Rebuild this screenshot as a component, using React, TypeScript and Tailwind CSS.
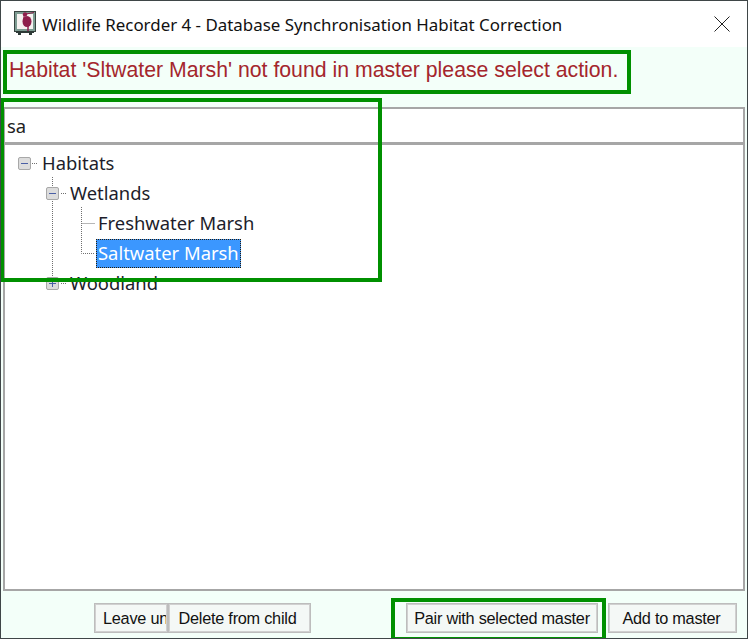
import { ReactNode } from "react";

function AppIcon() {
  return (
    <svg width="24" height="26" viewBox="0 0 24 26" className="shrink-0">
      <rect x="1.5" y="0.5" width="21" height="20" fill="#7d9c92" stroke="#37433f" strokeWidth="1" />
      <rect x="4" y="3" width="16" height="15" fill="#f6f3f1" />
      <ellipse cx="14" cy="10.5" rx="4.5" ry="5.5" fill="#8e1f4c" />
      <circle cx="12" cy="3.5" r="2.2" fill="#8e1f4c" />
      <path d="M11 4 L12 8 L10 8 Z" fill="#8e1f4c" />
      <path d="M13 3 L21 1.5" stroke="#8e1f4c" strokeWidth="1" />
      <path d="M15 15 V20" stroke="#8e1f4c" strokeWidth="1.5" />
      <rect x="3" y="20" width="18" height="2" fill="#2e3a37" />
      <rect x="5" y="22" width="3" height="2" fill="#2e3a37" />
      <rect x="16" y="22" width="3" height="2" fill="#2e3a37" />
    </svg>
  );
}

function CloseIcon() {
  return (
    <svg width="16" height="16" viewBox="0 0 16 16">
      <path d="M0.5 0.5 L15.5 15.5 M15.5 0.5 L0.5 15.5" stroke="#222" strokeWidth="1" fill="none" />
    </svg>
  );
}

function Expander({ open }: { open: boolean }) {
  return (
    <span className="relative block w-[13px] h-[13px] shrink-0 rounded-[2px] border border-[#a8a8a8] bg-[#dcdcdc]">
      <span className="absolute left-[2px] top-[5px] w-[7px] h-px bg-[#4a5fa5]" />
      {!open && <span className="absolute left-[5px] top-[2px] w-px h-[7px] bg-[#4a5fa5]" />}
    </span>
  );
}

function TreeRow({ indent, open, selected, children }: { indent: string; open?: boolean; selected?: boolean; children: ReactNode }) {
  return (
    <div className={`flex items-center h-[30px] ${indent}`}>
      {open !== undefined && <Expander open={open} />}
      {selected ? (
        <span className="flex items-center h-[29px] ml-[1px] px-[1px] bg-[#3b97ff] text-white border border-dotted border-[#2a1c08]">{children}</span>
      ) : (
        <span className={open !== undefined ? "ml-[11px]" : "ml-[3px]"}>{children}</span>
      )}
    </div>
  );
}

function TreeLines() {
  return (
    <svg width="120" height="150" viewBox="0 0 120 150" className="absolute left-0 top-0">
      <g stroke="#6f6f6f" strokeWidth="1" strokeDasharray="1 1" fill="none">
        <path d="M27 18.5 H33" />
        <path d="M47.5 32 V131" />
        <path d="M56 48.5 H62" />
        <path d="M76.5 62 V108.5 H90" />
        <path d="M76.5 78.5 H90" />
        <path d="M56 138.5 H62" />
      </g>
    </svg>
  );
}

function ActionButton({ className, children }: { className: string; children: ReactNode }) {
  return (
    <button className={`h-[30px] pt-px overflow-hidden whitespace-nowrap border-2 border-[#d0d0d0] outline outline-1 -outline-offset-1 outline-[#bdbdbd] bg-[#f4f8f6] text-[#111] text-[16.3px] font-['Liberation_Sans',sans-serif] tracking-[-0.25px] ${className}`}>
      {children}
    </button>
  );
}

export default function App() {
  return (
    <div className="relative w-[748px] h-[639px] overflow-hidden bg-[#f3fff9] border border-[#3f4648] flex flex-col">
      {/* Title bar */}
      <div className="flex items-center h-[46px] bg-white pl-[12px] pr-[17px] shrink-0">
        <AppIcon />
        <span className="ml-[5px] pt-[2px] text-[16.9px] text-[#111] font-['Noto_Sans',sans-serif] whitespace-nowrap">
          Wildlife Recorder 4 - Database Synchronisation Habitat Correction
        </span>
        <span className="ml-auto flex"><CloseIcon /></span>
      </div>

      {/* Message */}
      <div className="h-[60px] shrink-0 pl-[8px] pt-[9px] text-[21.25px] leading-[28px] text-[#a4262c] font-['Liberation_Sans',sans-serif] whitespace-nowrap">
        Habitat 'Sltwater Marsh' not found in master please select action.
      </div>

      {/* Search box */}
      <div className="mx-[2px] h-[38px] shrink-0 flex items-center pl-[2px] bg-white border-2 border-[#a6a6a6] border-b-[3px] text-[18.4px] text-[#222] font-['Noto_Sans',sans-serif]">
        sa
      </div>

      {/* Tree */}
      <div className="relative mx-[2px] h-[446px] shrink-0 bg-white border-2 border-t-0 border-[#a6a6a6] pt-[3px] text-[18.4px] text-[#1d1d2b] font-['Noto_Sans',sans-serif]">
        <TreeLines />
        <TreeRow indent="pl-[13px]" open={true}>Habitats</TreeRow>
        <TreeRow indent="pl-[41px]" open={true}>Wetlands</TreeRow>
        <TreeRow indent="pl-[90px]">Freshwater Marsh</TreeRow>
        <TreeRow indent="pl-[90px]" selected>Saltwater Marsh</TreeRow>
        <TreeRow indent="pl-[41px]" open={false}>Woodland</TreeRow>
      </div>

      {/* Buttons */}
      <div className="flex items-start pt-[12px] pl-[93px]">
        <ActionButton className="w-[74px] text-left pl-[7px]">Leave unchanged</ActionButton>
        <ActionButton className="w-[143px] pr-[4px]">Delete from child</ActionButton>
        <ActionButton className="ml-[95px] w-[192px]">Pair with selected master</ActionButton>
        <ActionButton className="ml-[10px] w-[129px] pr-[2px]">Add to master</ActionButton>
      </div>

      {/* Green annotation boxes */}
      <div className="absolute left-[2px] top-[49px] w-[628px] h-[44px] border-[4px] border-[#009000]" />
      <div className="absolute -left-px top-[97px] w-[382px] h-[184px] border-[4px] border-[#009000]" />
      <div className="absolute left-[390px] top-[597px] w-[215px] h-[43px] border-[4px] border-[#009000]" />
    </div>
  );
}
